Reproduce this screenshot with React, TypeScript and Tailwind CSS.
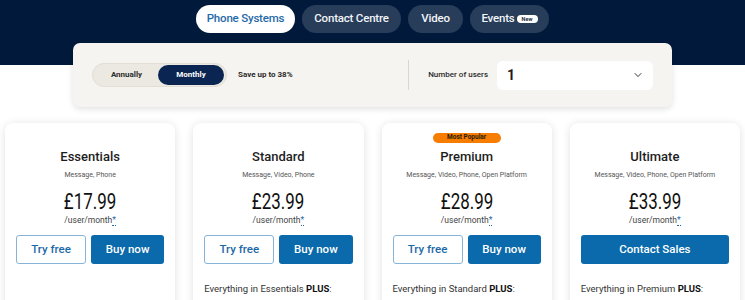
import { ChevronDown } from 'lucide-react'

const tabs = [
  { label: 'Phone Systems', width: 'w-[99px]', active: true },
  { label: 'Contact Centre', width: 'w-[99px]' },
  { label: 'Video', width: 'w-[55px]' },
  { label: 'Events', width: 'w-[79px]', badge: 'New' },
]

const plans = [
  {
    name: 'Essentials',
    features: 'Message, Phone',
    price: '£17.99',
    trial: true,
  },
  {
    name: 'Standard',
    features: 'Message, Video, Phone',
    price: '£23.99',
    trial: true,
    plus: 'Essentials',
  },
  {
    name: 'Premium',
    features: 'Message, Video, Phone, Open Platform',
    price: '£28.99',
    trial: true,
    plus: 'Standard',
    popular: true,
  },
  {
    name: 'Ultimate',
    features: 'Message, Video, Phone, Open Platform',
    price: '£33.99',
    plus: 'Premium',
  },
]

export default function App() {
  return (
    <div className="min-h-[300px] bg-white font-['Roboto','Liberation_Sans',sans-serif] text-[#1d1d1d]">
      {/* Product tabs */}
      <div className="h-[65px] bg-[#011a3b] pt-[5px]">
        <div className="flex justify-center gap-[7px]">
          {tabs.map(tab => (
            <button
              key={tab.label}
              className={
                tab.active
                  ? `flex h-[28px] ${tab.width} items-center justify-center rounded-full bg-white text-[11.5px] font-medium tracking-[-0.2px] text-[#1f6aa9]`
                  : `flex h-[28px] ${tab.width} items-center justify-center gap-[2px] rounded-full bg-[#273d5a] text-[11.5px] font-medium tracking-[-0.2px] text-[#f2f4f7]`
              }
            >
              {tab.label}
              {tab.badge && (
                <span className="flex h-[8px] w-[21px] items-center justify-center rounded-full bg-white text-[5.5px] font-bold tracking-normal text-[#1d2b40]">
                  {tab.badge}
                </span>
              )}
            </button>
          ))}
        </div>
      </div>

      {/* Billing filters */}
      <div className="mx-auto -mt-[22px] flex h-[64px] w-[599px] items-center justify-between rounded-[7px] bg-[#f5f4f0] px-[19px] shadow-[0_2px_6px_rgba(0,0,0,0.12)]">
        <div className="flex items-center gap-[11px]">
          <div className="flex h-[24px] w-[135px] items-center rounded-full border border-[#e2ded6] bg-[#ece9e2] p-[2px]">
            <button className="flex-1 text-[8px] font-bold text-[#2b2b2b]">Annually</button>
            <button className="flex h-[20px] w-[66px] items-center justify-center rounded-full bg-[#0a2552] text-[8px] font-bold text-white">
              Monthly
            </button>
          </div>
          <span className="text-[8px] font-bold text-[#2b2b2b]">Save up to 38%</span>
        </div>
        <div className="flex items-center">
          <div className="h-[30px] w-[1px] bg-[#d9d6ce]" />
          <span className="ml-[19px] text-[8px] font-medium text-[#2b2b2b]">Number of users</span>
          <div className="ml-[9px] flex h-[29px] w-[156px] items-center justify-between rounded-[6px] bg-white pr-[9px] pl-[10px]">
            <span className="text-[14px] font-bold text-[#1d1d1d]">1</span>
            <ChevronDown size={12} strokeWidth={2} className="text-[#333]" />
          </div>
        </div>
      </div>

      {/* Plans */}
      <div className="mt-[16px] flex gap-[18px] px-[5px]">
        {plans.map(plan => (
          <div
            key={plan.name}
            className="flex min-h-[200px] flex-1 flex-col items-center rounded-[8px] bg-white px-[11px] pt-[10px] shadow-[0_1px_8px_rgba(0,0,0,0.12)]"
          >
            <div className="flex h-[10px] items-center">
              {plan.popular && (
                <span className="flex h-[10px] w-[68px] items-center justify-center rounded-full bg-[#f77d00] text-[6.5px] font-bold text-[#2a1a05]">
                  Most Popular
                </span>
              )}
            </div>
            <h3 className="mt-[4px] text-[13px] leading-[20px] font-medium">{plan.name}</h3>
            <p className="mt-[3px] text-[7px] leading-[10px] text-[#555]">{plan.features}</p>
            <p className="mt-[10px] scale-x-[0.77] text-[22px] leading-[24px] text-[#111]">{plan.price}</p>
            <p className="text-[8.5px] leading-[12px] text-[#444]">
              /user/month
              <span className="border-b border-dotted border-[#1c69a8] text-[#1c69a8]">*</span>
            </p>
            <div className="mt-[9px] flex w-full gap-[5px]">
              {plan.trial ? (
                <>
                  <button className="h-[29px] w-[70px] rounded-[3px] border border-[#86b4d8] text-[11.5px] font-medium text-[#1c69a8]">
                    Try free
                  </button>
                  <button className="h-[29px] flex-1 rounded-[3px] bg-[#0a6aab] text-[11.5px] font-medium text-white">
                    Buy now
                  </button>
                </>
              ) : (
                <button className="h-[29px] flex-1 rounded-[3px] bg-[#0a6aab] text-[11.5px] font-medium text-white">
                  Contact Sales
                </button>
              )}
            </div>
            {plan.plus && (
              <p className="mt-[18px] w-full text-[9.5px] leading-[14px] text-[#333]">
                Everything in {plan.plus} <span className="font-bold text-[#111]">PLUS</span>:
              </p>
            )}
          </div>
        ))}
      </div>
    </div>
  )
}
